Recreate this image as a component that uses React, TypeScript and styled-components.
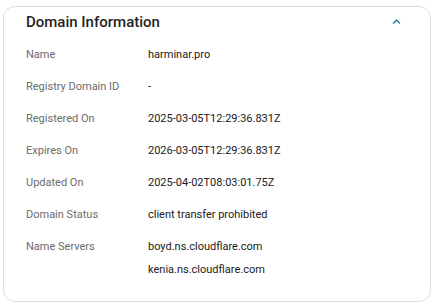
import React from "react";
import styled, { createGlobalStyle } from "styled-components";

const GlobalStyle = createGlobalStyle`
  body {
    margin: 0;
    background: #ffffff;
    font-family: Roboto, "Noto Sans", sans-serif;
  }
`;

interface Field {
  label: string;
  values: string[];
}

const fields: Field[] = [
  { label: "Name", values: ["harminar.pro"] },
  { label: "Registry Domain ID", values: ["-"] },
  { label: "Registered On", values: ["2025-03-05T12:29:36.831Z"] },
  { label: "Expires On", values: ["2026-03-05T12:29:36.831Z"] },
  { label: "Updated On", values: ["2025-04-02T08:03:01.75Z"] },
  { label: "Domain Status", values: ["client transfer prohibited"] },
  { label: "Name Servers", values: ["boyd.ns.cloudflare.com", "kenia.ns.cloudflare.com"] },
];

const App: React.FC = () => (
  <>
    <GlobalStyle />
    <Page>
      <Card>
        <Header>
          <Title>Domain Information</Title>
          <Toggle aria-label="collapse">
            <svg width="9" height="6" viewBox="0 0 9 6">
              <path d="M1 4.5 L4.5 1.2 L8 4.5" fill="none" stroke="#1b7d8a" strokeWidth="1.3" />
            </svg>
          </Toggle>
        </Header>
        <List>
          {fields.map((f) => (
            <Row key={f.label}>
              <Label>{f.label}</Label>
              <Values>
                {f.values.map((v) => (
                  <Value key={v}>{v}</Value>
                ))}
              </Values>
            </Row>
          ))}
        </List>
      </Card>
    </Page>
  </>
);

export default App;

const Page = styled.div`
  padding: 6px 5px 5px 3px;
`;

const Card = styled.section`
  height: 296px;
  box-sizing: border-box;
  border: 1px solid #dadde2;
  border-radius: 12px;
  padding: 0 22px;
`;

const Header = styled.div`
  display: flex;
  align-items: center;
  justify-content: space-between;
  height: 30px;
`;

const Title = styled.h2`
  margin: 0;
  font-size: 15px;
  font-weight: 500;
  color: #1f1f1f;
`;

const Toggle = styled.button`
  display: flex;
  align-items: center;
  justify-content: center;
  width: 20px;
  height: 20px;
  margin-right: 2px;
  padding: 0;
  border: none;
  background: none;
`;

const List = styled.div`
  display: flex;
  flex-direction: column;
  padding-top: 2px;
`;

const Row = styled.div`
  display: grid;
  grid-template-columns: 122px 1fr;
  align-items: start;
`;

const Label = styled.div`
  font-size: 11px;
  line-height: 32px;
  color: #6b6b6b;
`;

const Values = styled.div`
  display: flex;
  flex-direction: column;
  padding: 4px 0 5px;
`;

const Value = styled.div`
  font-size: 11px;
  line-height: 23px;
  color: #202020;
`;
